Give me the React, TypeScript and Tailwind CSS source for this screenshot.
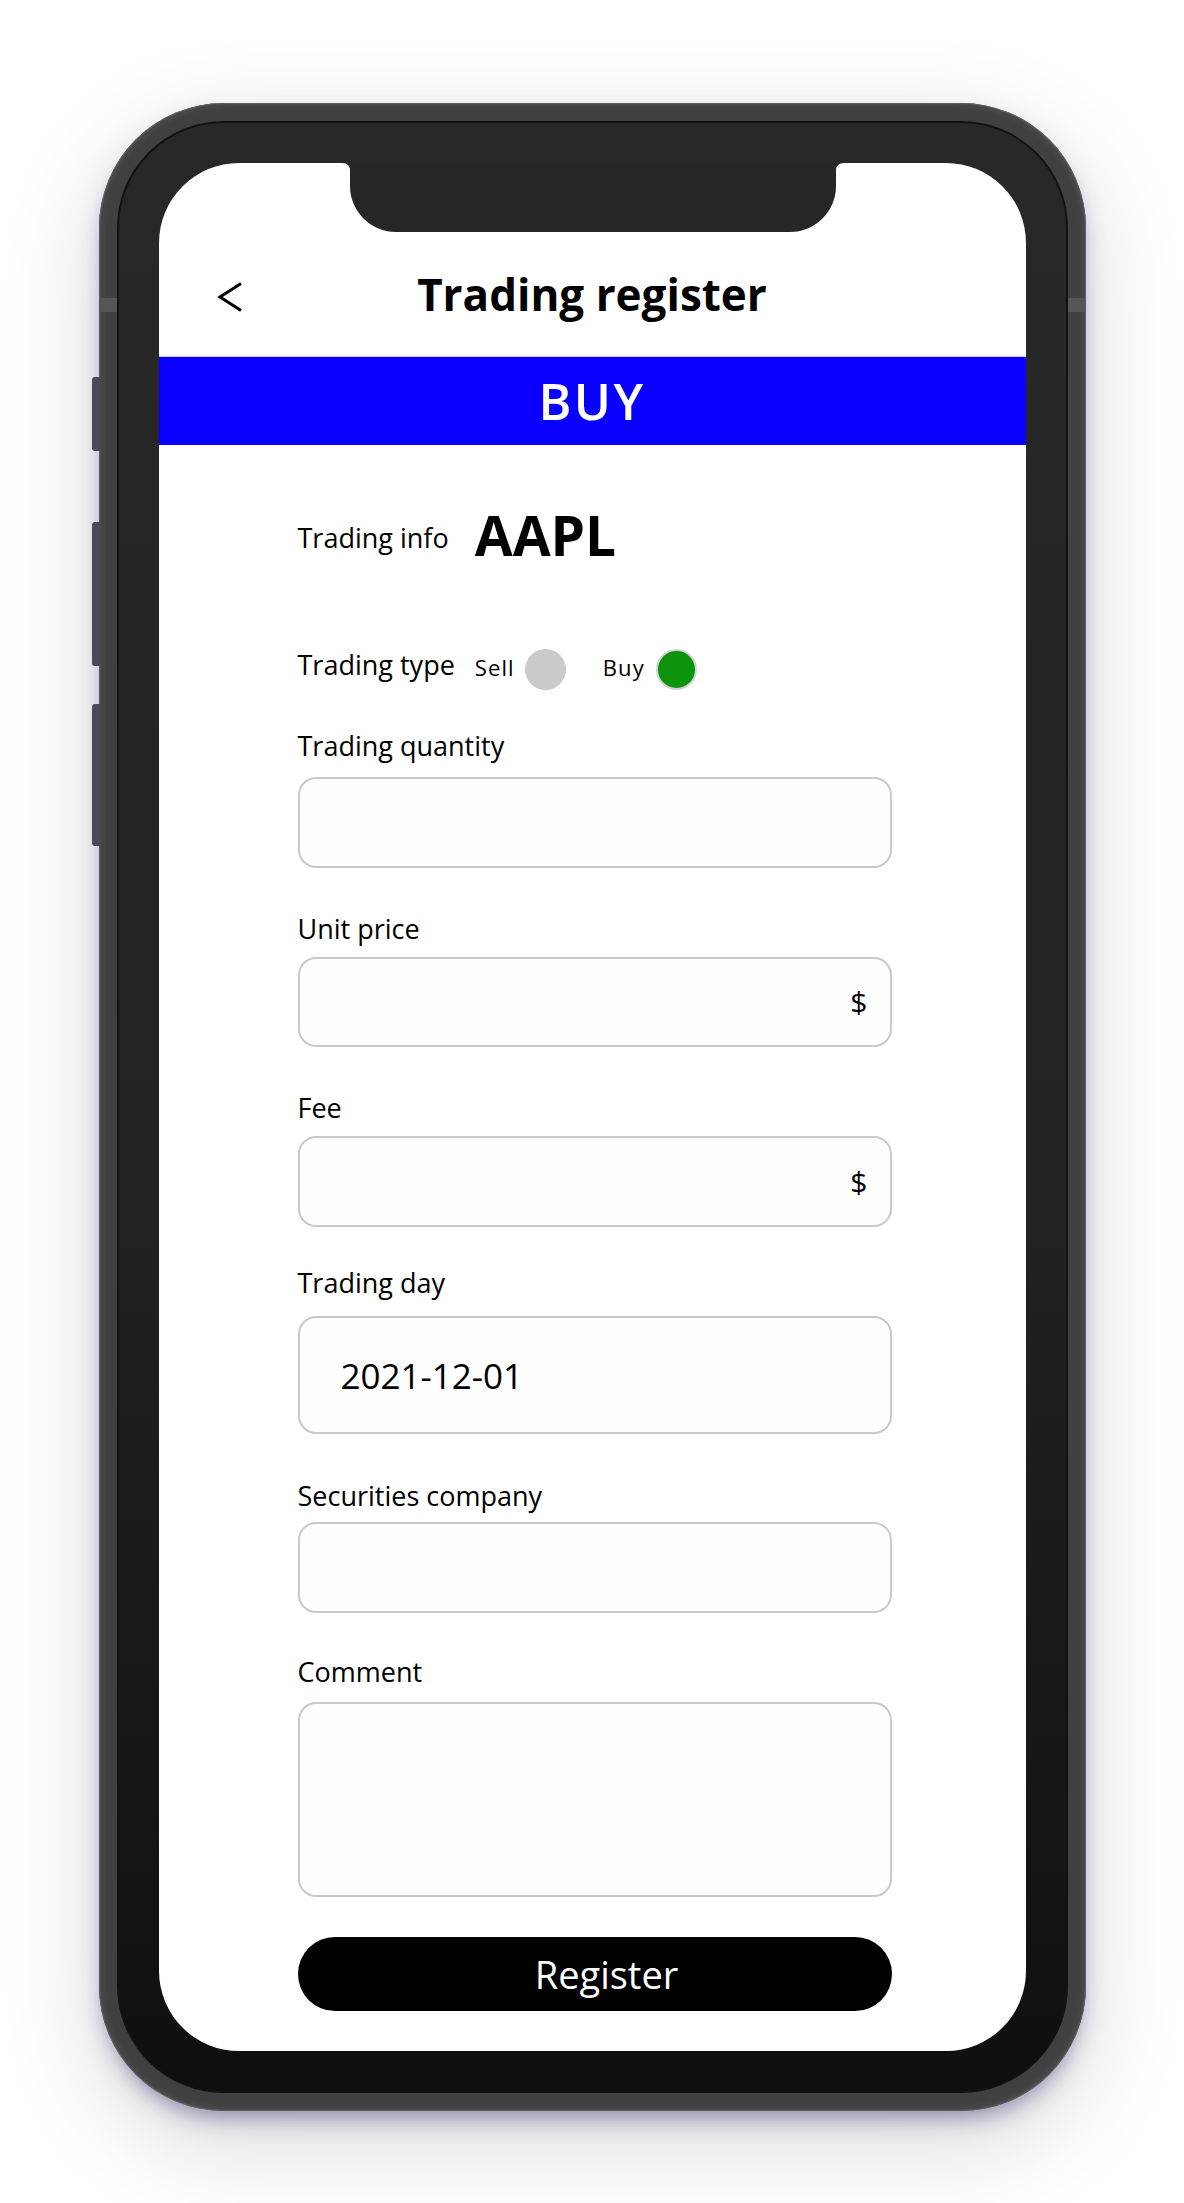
import React from 'react';

type FieldProps = {
  label: string;
  labelClass: string;
  boxClass: string;
  children?: React.ReactNode;
};

function Field({ label, labelClass, boxClass, children }: FieldProps) {
  return (
    <>
      <div className={`text-[27px] leading-none text-black ${labelClass}`}>{label}</div>
      <div
        className={`w-[594px] rounded-[18px] border-2 border-[#c9c9c9] bg-[#fefefe] flex items-center ${boxClass}`}
      >
        {children}
      </div>
    </>
  );
}

function Chevron() {
  return (
    <svg width="26" height="30" viewBox="0 0 26 30" fill="none">
      <polyline points="24,1.5 3,15 24,28.5" stroke="#000" strokeWidth="3" />
    </svg>
  );
}

// notch with the little outward fillets where it meets the screen edge
function Notch() {
  return (
    <svg
      className="absolute top-0 left-[183px]"
      width="502"
      height="69"
      viewBox="0 0 502 69"
    >
      <path
        d="M0 0 L502 0 Q494 0 494 8 L494 23 A46 46 0 0 1 448 69 L54 69 A46 46 0 0 1 8 23 L8 8 Q8 0 0 0 Z"
        fill="#262626"
      />
    </svg>
  );
}

export default function App() {
  return (
    <div className="min-h-[2203px] w-full bg-white flex justify-center pt-[103px] font-['Open_Sans',sans-serif]">
      <div className="relative w-[987px] h-[2008px] rounded-[125px] bg-[#404040] p-[18px] shadow-[inset_0_0_0_1px_#5e5e5e,inset_0_0_6px_3px_rgba(255,255,255,0.07),0_12px_22px_-6px_rgba(70,65,130,0.55),0_30px_100px_rgba(0,0,0,0.16)]">
        {/* side buttons */}
        <div className="absolute left-[-7px] top-[274px] w-[8px] h-[74px] rounded-l-[3px] bg-[#4a4a56]" />
        <div className="absolute left-[-7px] top-[419px] w-[8px] h-[144px] rounded-l-[3px] bg-[#4a4a56]" />
        <div className="absolute left-[-7px] top-[601px] w-[8px] h-[142px] rounded-l-[3px] bg-[#4a4a56]" />
        {/* antenna bands */}
        <div className="absolute left-0 top-[195px] w-[18px] h-[14px] bg-[#555555]" />
        <div className="absolute right-0 top-[195px] w-[18px] h-[14px] bg-[#555555]" />

        <div className="w-full h-full rounded-[107px] border-2 border-[#121212] bg-[linear-gradient(180deg,#282828_0%,#222222_55%,#0f0f0f_100%)] p-[40px]">
          <div className="relative w-[867px] h-full rounded-[80px] bg-white overflow-hidden flex flex-col">
            <Notch />

            {/* header */}
            <div className="h-[193px] shrink-0 grid grid-cols-[1fr_auto_1fr] items-start pt-[109px]">
              <div className="pl-[58px] pt-[10px]">
                <Chevron />
              </div>
              <div className="text-[44px] font-bold leading-none text-black">Trading register</div>
              <div />
            </div>
            <div className="h-px shrink-0 bg-[#c8c8c8]" />
            <div className="h-[88px] shrink-0 bg-[#0900ff] flex items-center justify-center">
              <span className="text-[50px] font-semibold leading-none tracking-[0.05em] text-white">BUY</span>
            </div>

            {/* form */}
            <div className="flex flex-col pl-[139px]">
              <div className="mt-[62px] flex items-center gap-[26px]">
                <span className="text-[27px] leading-none pt-[6px]">Trading info</span>
                <span className="text-[55px] font-bold leading-none">AAPL</span>
              </div>

              <div className="mt-[86px] h-[42px] flex items-center">
                <span className="text-[27px] leading-none mb-[10px]">Trading type</span>
                <span className="ml-[20px] mb-[4px] text-[22px] leading-none tracking-[0.05em]">Sell</span>
                <span className="ml-[10px] w-[41px] h-[41px] rounded-full bg-[#cbcbcb]" />
                <span className="ml-[37px] mb-[4px] text-[22px] leading-none tracking-[0.05em]">Buy</span>
                <span className="ml-[11px] w-[41px] h-[41px] rounded-full bg-[#0d920d] border-2 border-[#d2d2d2]" />
              </div>

              <Field label="Trading quantity" labelClass="mt-[42px]" boxClass="mt-[18px] h-[91px]" />

              <Field label="Unit price" labelClass="mt-[47px]" boxClass="mt-[15px] h-[90px] justify-end pr-[22px]">
                <span className="text-[30px] leading-none">$</span>
              </Field>

              <Field label="Fee" labelClass="mt-[47px]" boxClass="mt-[15px] h-[91px] justify-end pr-[22px]">
                <span className="text-[30px] leading-none">$</span>
              </Field>

              <Field label="Trading day" labelClass="mt-[42px]" boxClass="mt-[20px] h-[118px] pl-[41px]">
                <span className="text-[35px] leading-none">2021-12-01</span>
              </Field>

              <Field label="Securities company" labelClass="mt-[48px]" boxClass="mt-[13px] h-[91px]" />

              <Field label="Comment" labelClass="mt-[45px]" boxClass="mt-[17px] h-[195px]" />

              <button className="mt-[40px] w-[594px] h-[74px] rounded-full bg-black text-white flex items-center justify-center pl-[24px]">
                <span className="text-[38px] leading-none">Register</span>
              </button>
            </div>
          </div>
        </div>
      </div>
    </div>
  );
}
